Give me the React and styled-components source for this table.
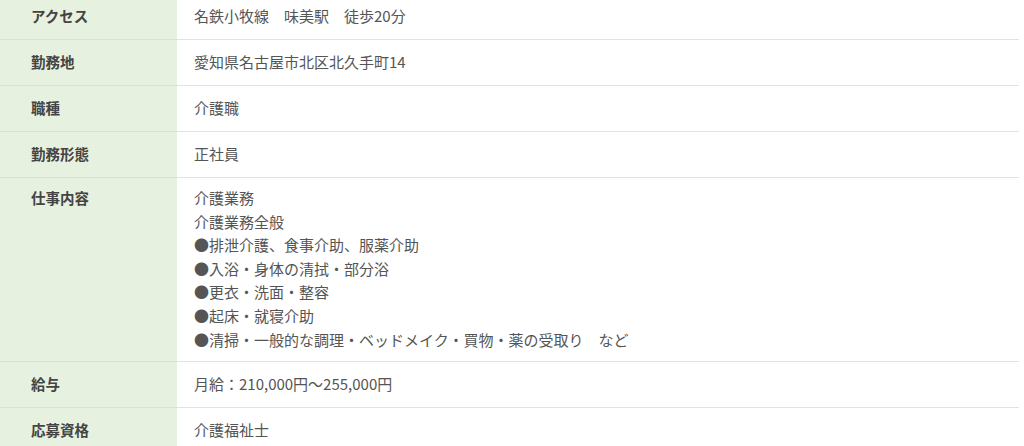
import React from 'react';
import styled, { createGlobalStyle } from 'styled-components';

const GlobalStyle = createGlobalStyle`
  html, body {
    margin: 0;
    padding: 0;
    background: #fff;
  }
  body {
    font-family: 'Noto Sans CJK JP', 'Noto Sans', sans-serif;
    font-size: 15px;
    color: #555;
    overflow: hidden;
  }
`;

const Table = styled.table`
  width: 1019px;
  margin-top: -6px;
  border-collapse: collapse;
  table-layout: fixed;
`;

const Row = styled.tr`
  border-bottom: 1px solid #e2e2e2;
`;

const Label = styled.th`
  width: 177px;
  box-sizing: border-box;
  padding: ${({ $tall }) => ($tall ? '8px 10px 10px 31px' : '10px 10px 11px 31px')};
  background: #e7f1df;
  border-bottom: 1px solid #d6e6ca;
  text-align: left;
  vertical-align: top;
  font-size: 14.5px;
  font-weight: 700;
  line-height: 24px;
  color: #444;
`;

const Value = styled.td`
  padding: ${({ $tall }) => ($tall ? '8px 10px 10px 17px' : '10px 10px 11px 17px')};
  vertical-align: top;
  font-size: 15px;
  line-height: 24px;
  color: #555;
`;

const Lines = styled.div`
  line-height: 23.6px;
`;

const rows = [
  { label: 'アクセス', value: '名鉄小牧線　味美駅　徒歩20分' },
  { label: '勤務地', value: '愛知県名古屋市北区北久手町14' },
  { label: '職種', value: '介護職' },
  { label: '勤務形態', value: '正社員' },
  {
    label: '仕事内容',
    lines: [
      '介護業務',
      '介護業務全般',
      '●排泄介護、食事介助、服薬介助',
      '●入浴・身体の清拭・部分浴',
      '●更衣・洗面・整容',
      '●起床・就寝介助',
      '●清掃・一般的な調理・ベッドメイク・買物・薬の受取り　など',
    ],
  },
  { label: '給与', value: '月給：210,000円～255,000円' },
  { label: '応募資格', value: '介護福祉士' },
];

const App = () => (
  <>
    <GlobalStyle />
    <Table>
      <tbody>
        {rows.map((row) => (
          <Row key={row.label}>
            <Label $tall={!!row.lines}>{row.label}</Label>
            <Value $tall={!!row.lines}>
              {row.lines ? (
                <Lines>
                  {row.lines.map((line) => (
                    <div key={line}>{line}</div>
                  ))}
                </Lines>
              ) : (
                row.value
              )}
            </Value>
          </Row>
        ))}
      </tbody>
    </Table>
  </>
);

export default App;
